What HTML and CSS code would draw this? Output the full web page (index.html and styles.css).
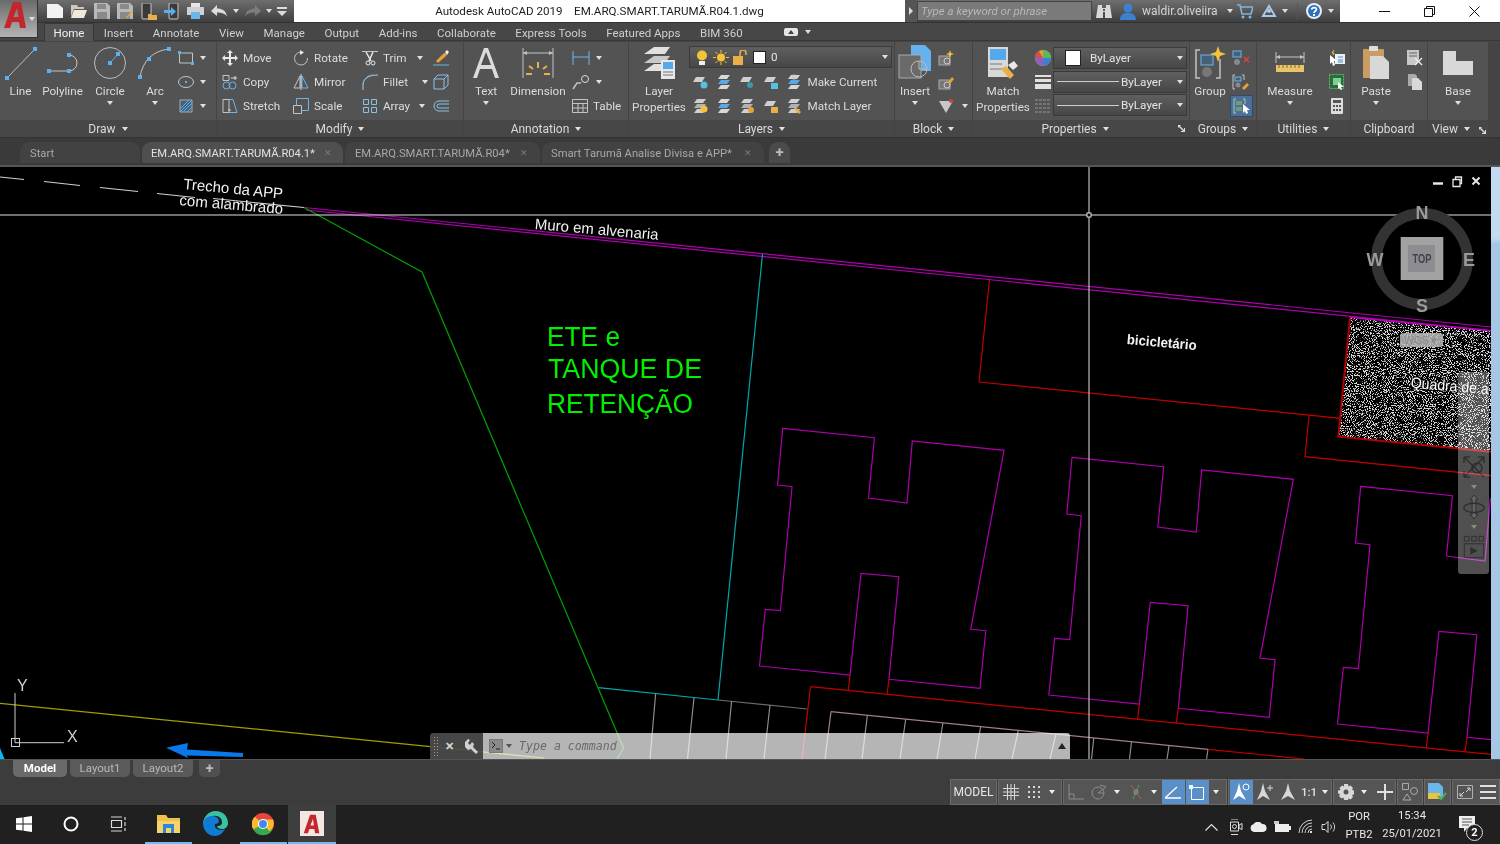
FILE: index.html
```html
<!DOCTYPE html>
<html lang="pt">
<head>
<meta charset="utf-8">
<title>Autodesk AutoCAD 2019</title>
<link rel="stylesheet" href="styles.css">
</head>
<body>
<svg class="sprite" width="0" height="0">
  <symbol id="sheet" viewBox="0 0 16 16"><path d="M4 3h9l-3 5H1z" fill="#cfcfcf"/></symbol>
  <symbol id="stack" viewBox="0 0 16 16"><path d="M5 1h9l-3 4H2z" fill="#d8d8d8"/><path d="M5 6h9l-3 4H2z" fill="#5aa7e8"/><path d="M5 11h9l-3 4H2z" fill="#d8d8d8"/></symbol>
  <symbol id="stackg" viewBox="0 0 16 16"><path d="M5 1h9l-3 4H2z" fill="#d0d0d0"/><path d="M5 6h9l-3 4H2z" fill="#b0b0b0"/><path d="M5 11h9l-3 4H2z" fill="#d0d0d0"/></symbol>
</svg>

<header class="titlebar">
  <div class="app-btn">
    <svg width="24" height="28" viewBox="0 0 24 28"><path d="M1 27 10 1h8l5 26h-6l-1-6H9l-2 6zM10.500 16h5l-1.500-9z" fill="#c2272d"/></svg>
    <span class="caret app-caret"></span>
  </div>
  <div class="qat">
    <span class="qi"><svg width="16" height="14" viewBox="0 0 16 14"><path d="M0 0h11l5 4v10H0z" fill="#f2f2f2"/></svg></span>
    <span class="qi"><svg width="17" height="14" viewBox="0 0 17 14"><path d="M1 1h6l1 2h6v2H4l-3 8z" fill="#cfc9b8"/><path d="M4 6h13l-3 8H1z" fill="#efe9d8"/></svg></span>
    <span class="qi"><svg width="16" height="16" viewBox="0 0 16 16"><path d="M0 0h13l3 3v13H0z" fill="#b9b9b9"/><path d="M3 1h9v5H3zM3 9h10v7H3z" fill="#8a8a8a"/></svg></span>
    <span class="qi"><svg width="16" height="16" viewBox="0 0 16 16"><path d="M0 0h13l3 3v13H0z" fill="#b9b9b9"/><path d="M3 1h9v5H3zM3 9h10v7H3z" fill="#8a8a8a"/><path d="M9 14l6-6 1 1-6 6z" fill="#e8a33d"/></svg></span>
    <span class="qi"><svg width="16" height="17" viewBox="0 0 16 17"><rect x="1" y="0" width="9" height="16" rx="1" fill="#3a3a3a" stroke="#c8c8c8"/><path d="M7 11h3l1 1h5v5H7z" fill="#e8b04a"/></svg></span>
    <span class="qi"><svg width="16" height="17" viewBox="0 0 16 17"><rect x="5" y="0" width="9" height="16" rx="1" fill="#3a3a3a" stroke="#c8c8c8"/><path d="M0 7h7V4l5 4.500-5 4.500V10H0z" fill="#56b0ee"/></svg></span>
    <span class="qi"><svg width="17" height="16" viewBox="0 0 17 16"><path d="M4 0h9v4H4z" fill="#e6e6e6"/><path d="M0 4h17v8H0z" fill="#d0d0d0"/><path d="M4 9h9v7H4z" fill="#6bb6ea"/></svg></span>
    <span class="qi"><svg width="16" height="12" viewBox="0 0 16 12"><path d="M0 6l6-6v3.500c5 0 9 2 10 8-2-3-5-4-10-4V11z" fill="#dcdcdc"/></svg></span>
    <span class="caret qcaret"></span>
    <span class="qi qredo"><svg width="16" height="12" viewBox="0 0 16 12"><path d="M16 6l-6-6v3.500c-5 0-9 2-10 8 2-3 5-4 10-4V11z" fill="#7d7d7d"/></svg></span>
    <span class="caret qcaret2"></span>
    <span class="qi qcustom"><svg width="10" height="9" viewBox="0 0 10 9"><path d="M0 0h10v2H0zM0 4h10L5 9z" fill="#dcdcdc"/></svg></span>
  </div>
  <div class="doc-title">Autodesk AutoCAD 2019 &nbsp;&nbsp; EM.ARQ.SMART.TARUMÃ.R04.1.dwg</div>
  <div class="search-arrow"><span class="tri-r"></span></div>
  <div class="search-box">Type a keyword or phrase</div>
  <div class="infocenter">
    <svg class="ic-bino" width="16" height="15" viewBox="0 0 16 15"><path d="M2 1h4v3h4V1h4l2 13H9V8H7v6H0z" fill="#d8d8d8"/><path d="M7 5h2v2H7z" fill="#555"/></svg>
    <svg class="ic-user" width="16" height="17" viewBox="0 0 16 17"><circle cx="8" cy="5" r="4.500" fill="#3f7fd0"/><path d="M0 17c0-5 3-6 5-7h6c2 1 5 2 5 7z" fill="#3f7fd0"/></svg>
    <span class="user">waldir.oliveiira</span>
    <span class="caret ic-c1"></span>
    <svg class="ic-cart" width="16" height="15" viewBox="0 0 16 15"><path d="M0 1h3l2 9h9l2-7H4" fill="none" stroke="#7fb4e0" stroke-width="1.600"/><circle cx="6" cy="13" r="1.500" fill="#7fb4e0"/><circle cx="13" cy="13" r="1.500" fill="#7fb4e0"/></svg>
    <svg class="ic-a360" width="16" height="14" viewBox="0 0 16 14"><path d="M8 2 2 12h12z" fill="none" stroke="#a8c8ea" stroke-width="2"/><circle cx="8" cy="7" r="2" fill="#a8c8ea"/></svg>
    <span class="caret ic-c2"></span>
    <span class="ic-sep"></span>
    <svg class="ic-help" width="16" height="16" viewBox="0 0 16 16"><circle cx="8" cy="8" r="8" fill="#e8eef6"/><circle cx="8" cy="8" r="6" fill="#2f6fc0"/><path d="M5.500 6.500C6 4 10.500 4 10.500 6.500 10.500 8 8 8 8 10" fill="none" stroke="#fff" stroke-width="1.600"/><rect x="7" y="11" width="2" height="2" fill="#fff"/></svg>
    <span class="caret ic-c3"></span>
  </div>
  <div class="winctl">
    <svg width="11" height="11" viewBox="0 0 11 11"><path d="M0 5.500h11" stroke="#111"/></svg>
    <svg width="11" height="11" viewBox="0 0 11 11"><path d="M.5 2.500h8v8h-8zM2.500 2.500v-2h8v8h-2" fill="none" stroke="#111"/></svg>
    <svg width="11" height="11" viewBox="0 0 11 11"><path d="M.5.500l10 10M10.500.500l-10 10" stroke="#111"/></svg>
  </div>
</header>

<nav class="ribbon-tabs">
  <span class="rtab active">Home</span><span class="rtab">Insert</span><span class="rtab">Annotate</span><span class="rtab">View</span><span class="rtab">Manage</span><span class="rtab">Output</span><span class="rtab">Add-ins</span><span class="rtab">Collaborate</span><span class="rtab">Express Tools</span><span class="rtab">Featured Apps</span><span class="rtab">BIM 360</span>
  <svg class="rtab-extra" width="14" height="8" viewBox="0 0 14 8"><rect width="14" height="8" rx="2" fill="#e6e6e6"/><path d="M4 6l3-4 3 4z" fill="#444"/></svg>
  <span class="caret rtab-caret"></span>
</nav>

<section class="ribbon">
  <div class="panel p-draw">
    <div class="pbody">
      <div class="lg w41"><svg width="34" height="36" viewBox="0 0 34 36"><path d="M3 33 31 4" stroke="#bdbdbd"/><path d="M1 31h4v4H1zM29 2h4v4h-4z" fill="#5ab0f0"/></svg><span>Line</span></div>
      <div class="lg w43"><svg width="34" height="36" viewBox="0 0 34 36"><path d="M3 26H23A8 8 0 0 0 23 10" fill="none" stroke="#c4c4c4"/><path d="M1 24h4v4H1zM21 24h4v4h-4zM21 8h4v4h-4z" fill="#5ab0f0"/></svg><span>Polyline</span></div>
      <div class="lg w52"><svg width="34" height="36" viewBox="0 0 34 36"><circle cx="17" cy="18" r="15.500" fill="none" stroke="#bdbdbd"/><path d="M17 18l8-9" stroke="#5ab0f0"/><path d="M15 16h4v4h-4zM23 7h4v4h-4z" fill="#5ab0f0"/></svg><span>Circle</span><span class="caret"></span></div>
      <div class="lg w38"><svg width="34" height="36" viewBox="0 0 34 36"><path d="M2 32C5 15 15 6 31 4" fill="none" stroke="#c4c4c4"/><path d="M0 30h4v4H0zM9 12h4v4H9zM29 2h4v4h-4z" fill="#5ab0f0"/></svg><span>Arc</span><span class="caret"></span></div>
      <div class="col col-draw">
        <div class="row"><svg width="16" height="16" viewBox="0 0 16 16"><path d="M1.500 3h13v10h-13z" fill="none" stroke="#c4c4c4"/><path d="M0 1h3v3H0zM13 12h3v3h-3z" fill="#5ab0f0"/></svg><span class="caret cm"></span></div>
        <div class="row"><svg width="16" height="16" viewBox="0 0 16 16"><ellipse cx="8" cy="8" rx="7.500" ry="5.500" fill="none" stroke="#c4c4c4"/><path d="M7 7h2v2H7z" fill="#5ab0f0"/></svg><span class="caret cm"></span></div>
        <div class="row"><svg width="16" height="16" viewBox="0 0 16 16"><path d="M2 2h12v12H2z" fill="#46607a" stroke="#aaa"/><path d="M2 11 11 2M2 14 14 2M5 14l9-9M9 14l5-5" stroke="#5ab0f0"/></svg><span class="caret cm"></span></div>
      </div>
    </div>
    <div class="ptitle">Draw <span class="caret"></span></div>
  </div>

  <div class="panel p-modify">
    <div class="pbody pb5">
      <div class="col w71">
        <div class="row"><svg width="16" height="16" viewBox="0 0 16 16"><path d="M8 0l3 3H9v4h4V5l3 3-3 3V9H9v4h2l-3 3-3-3h2V9H3v2L0 8l3-3v2h4V3H5z" fill="#e8e8e8"/></svg><span class="t">Move</span></div>
        <div class="row"><svg width="16" height="16" viewBox="0 0 16 16"><path d="M1 1.500h6v5H1z" fill="none" stroke="#c4c4c4"/><circle cx="4.500" cy="11.500" r="3.500" fill="none" stroke="#6bb6ea"/><circle cx="10.500" cy="11.500" r="3.500" fill="none" stroke="#6bb6ea"/><path d="M9 4h6M13 2v4" stroke="#ddd"/></svg><span class="t">Copy</span></div>
        <div class="row"><svg width="16" height="16" viewBox="0 0 16 16"><path d="M1 1.500h6v13H1z" fill="none" stroke="#c4c4c4"/><path d="M7 1.500h4l4 13H7" fill="none" stroke="#6bb6ea"/><path d="M6 12h3" stroke="#ddd"/></svg><span class="t">Stretch</span></div>
      </div>
      <div class="col w69">
        <div class="row"><svg width="16" height="16" viewBox="0 0 16 16"><path d="M8 2A6.500 6.500 0 1 0 14.500 8" fill="none" stroke="#c4c4c4"/><path d="M7 0l4 2.500L7 5z" fill="#e8e8e8"/></svg><span class="t">Rotate</span></div>
        <div class="row"><svg width="16" height="16" viewBox="0 0 16 16"><path d="M7 2 1 14h6z" fill="none" stroke="#c4c4c4"/><path d="M9 2l6 12H9z" fill="none" stroke="#6bb6ea"/><path d="M8 0v16" stroke="#ddd"/></svg><span class="t">Mirror</span></div>
        <div class="row"><svg width="16" height="16" viewBox="0 0 16 16"><path d="M.5 7.500h8v8h-8z" fill="none" stroke="#c4c4c4"/><path d="M3.500.5h12v12" fill="none" stroke="#6bb6ea"/><path d="M3.500.5v7M15.500 12.500h-7" stroke="#6bb6ea"/></svg><span class="t">Scale</span></div>
      </div>
      <div class="col w71">
        <div class="row"><svg width="16" height="16" viewBox="0 0 16 16"><path d="M0 1.500h16" stroke="#c4c4c4"/><path d="M4 2l5 9M11 2 7 11" stroke="#e8e8e8" stroke-width="1.500"/><circle cx="6" cy="13" r="2" fill="none" stroke="#e8e8e8"/><circle cx="11" cy="13" r="2" fill="none" stroke="#e8e8e8"/></svg><span class="t">Trim</span><span class="caret ctrim"></span></div>
        <div class="row"><svg width="16" height="16" viewBox="0 0 16 16"><path d="M1 16V11C1 5 6 1 16 1" fill="none" stroke="#c4c4c4"/><path d="M1 11C1 5 6 1 11 1" fill="none" stroke="#6bb6ea"/></svg><span class="t">Fillet</span><span class="caret cfillet"></span></div>
        <div class="row"><svg width="16" height="16" viewBox="0 0 16 16"><path d="M1.500 1.500h5v5h-5zM9.500 1.500h5v5h-5zM1.500 9.500h5v5h-5zM9.500 9.500h5v5h-5z" fill="none" stroke="#8cc0e8"/></svg><span class="t">Array</span><span class="caret carray"></span></div>
      </div>
      <div class="col">
        <div class="row"><svg width="16" height="16" viewBox="0 0 16 16"><path d="M3 11 11 3l3 1-1 2-8 7z" fill="#e9a23b"/><path d="M12 2l2-2 2 2-2 3z" fill="#eee"/><path d="M0 15h16" stroke="#6bb6ea"/></svg></div>
        <div class="row"><svg width="16" height="16" viewBox="0 0 16 16"><path d="M1 5h10v10H1zM1 5l4-4h10v10l-4 4M11 5l4-4" fill="none" stroke="#8cc0e8"/></svg></div>
        <div class="row"><svg width="16" height="16" viewBox="0 0 16 16"><path d="M16 3H6a5 5 0 0 0 0 10h10M16 6H6a2 2 0 0 0 0 4h10" fill="none" stroke="#8cc0e8"/></svg></div>
      </div>
    </div>
    <div class="ptitle">Modify <span class="caret"></span></div>
  </div>

  <div class="panel p-anno">
    <div class="pbody">
      <div class="lg w44"><svg width="28" height="36" viewBox="0 0 28 36"><path d="M1 33 12 3h4l11 30h-4l-3-9H8l-3 9zM9 20h10L14 7z" fill="#dcdcdc"/></svg><span>Text</span><span class="caret"></span></div>
      <div class="lg w60"><svg width="34" height="36" viewBox="0 0 34 36"><path d="M2 3v30M32 3v30M2 8h30" stroke="#c4c4c4" fill="none"/><path d="M2 8l4-2v4zM32 8l-4-2v4z" fill="#c4c4c4"/><path d="M17 17v6M8 21l4 3M26 21l-4 3M5 29h6M23 29h6" stroke="#e9b04a" stroke-width="2"/></svg><span>Dimension</span></div>
      <div class="col col-anno">
        <div class="row"><svg width="18" height="16" viewBox="0 0 18 16"><path d="M1 1v14M17 1v14M1 7h16" stroke="#6bb6ea"/></svg><span class="caret cann"></span></div>
        <div class="row"><svg width="18" height="16" viewBox="0 0 18 16"><path d="M1 15l4-6h4" fill="none" stroke="#c4c4c4" stroke-width="1.500"/><circle cx="13" cy="5" r="3.500" fill="none" stroke="#ddd"/></svg><span class="caret cann"></span></div>
        <div class="row"><svg width="16" height="14" viewBox="0 0 16 14"><path d="M.5.500h15v13H.5zM.5 4.500h15M.5 9h15M6 4.500v9M11 4.500v9" fill="none" stroke="#c4c4c4"/></svg><span class="t">Table</span></div>
      </div>
    </div>
    <div class="ptitle">Annotation <span class="caret"></span></div>
  </div>

  <div class="panel p-layers">
    <div class="pbody">
      <div class="lg w60 lg2"><svg width="36" height="36" viewBox="0 0 36 36"><path d="M13 2h16l-5 7H3z" fill="#e0e0e0"/><path d="M13 11h16l-5 7H3z" fill="#c8c8c8"/><path d="M13 19h16l-5 7H3z" fill="#e0e0e0"/><rect x="20" y="15" width="14" height="19" fill="#e8e8e8"/><rect x="22" y="17" width="10" height="7" fill="#56a8ec"/><path d="M22 27h10M22 30h10" stroke="#777"/></svg><span>Layer<br>Properties</span></div>
      <div class="col col-layers">
        <div class="combo layer-combo">
          <svg width="14" height="15" viewBox="0 0 14 15"><circle cx="7" cy="5.500" r="5" fill="#f5c33b"/><path d="M4 11h6v4H4z" fill="#eee"/></svg>
          <svg width="16" height="15" viewBox="0 0 16 15"><circle cx="8" cy="7.500" r="4" fill="#f5c33b"/><path d="M8 0v3M8 12v3M0 7.500h3M13 7.500h3M2.500 2l2 2M11.500 11l2 2M2.500 13l2-2M11.500 4l2-2" stroke="#f5c33b"/></svg>
          <svg width="15" height="15" viewBox="0 0 15 15"><rect y="6" width="10" height="9" fill="#e9b04a"/><path d="M7 6V3a3 3 0 0 1 6 0v2" fill="none" stroke="#e9b04a" stroke-width="1.500"/></svg>
          <span class="swatch"></span>
          <span class="combo-t">0</span>
          <span class="caret combo-c"></span>
        </div>
        <div class="row lrow">
          <span class="li"><svg width="16" height="16"><use href="#sheet"/><circle cx="12" cy="11" r="3.500" fill="#56c0e0"/></svg></span>
          <span class="li"><svg width="16" height="16"><use href="#stack"/></svg></span>
          <span class="li"><svg width="16" height="16"><use href="#sheet"/><circle cx="11" cy="11" r="3" fill="#3a9aa8"/></svg></span>
          <span class="li"><svg width="16" height="16"><use href="#sheet"/><rect x="8" y="9" width="7" height="6" fill="#56c0e0"/></svg></span>
          <span class="li"><svg width="16" height="16"><use href="#stack"/><circle cx="8" cy="3" r="2.500" fill="#ccc"/></svg></span>
          <span class="t tl">Make Current</span>
        </div>
        <div class="row lrow">
          <span class="li"><svg width="16" height="16"><use href="#stackg"/><circle cx="12" cy="11" r="3.500" fill="#f5c33b"/></svg></span>
          <span class="li"><svg width="16" height="16"><use href="#stack"/></svg></span>
          <span class="li"><svg width="16" height="16"><use href="#stackg"/><circle cx="12" cy="12" r="3" fill="#e9a23b"/></svg></span>
          <span class="li"><svg width="16" height="16"><use href="#sheet"/><rect x="8" y="9" width="7" height="6" fill="#e9b04a"/></svg></span>
          <span class="li"><svg width="16" height="16"><use href="#stackg"/><path d="M9 9l6 5-2 2-5-5z" fill="#e9b04a"/></svg></span>
          <span class="t tl">Match Layer</span>
        </div>
      </div>
    </div>
    <div class="ptitle">Layers <span class="caret"></span></div>
  </div>

  <div class="panel p-block">
    <div class="pbody">
      <div class="lg w40"><svg width="36" height="36" viewBox="0 0 36 36"><path d="M14 0h14l6 6v20H14z" fill="#66b2f0"/><rect x="2" y="10" width="22" height="23" fill="#6a6a6a" stroke="#aaa"/><circle cx="22" cy="24" r="8" fill="none" stroke="#bbb"/><path d="M22 16v8h8" stroke="#bbb" fill="none"/></svg><span>Insert</span><span class="caret"></span></div>
      <div class="col col-block">
        <div class="row"><svg width="16" height="16" viewBox="0 0 16 16"><rect x="1" y="6" width="11" height="9" fill="#777" stroke="#aaa"/><circle cx="9" cy="11" r="3" fill="none" stroke="#ccc"/><path d="M12 0l1 3 3 1-3 1-1 3-1-3-3-1 3-1z" fill="#f5c33b"/></svg></div>
        <div class="row"><svg width="16" height="16" viewBox="0 0 16 16"><rect x="1" y="6" width="11" height="9" fill="#777" stroke="#aaa"/><circle cx="9" cy="11" r="3" fill="none" stroke="#ccc"/><path d="M10 8l4-5 2 2-4 5z" fill="#e9a23b"/></svg></div>
        <div class="row"><svg width="16" height="16" viewBox="0 0 16 16"><path d="M1 3h14L8 15z" fill="#c8c8c8"/><circle cx="13" cy="3" r="2" fill="#d04040"/></svg><span class="caret cblock"></span></div>
      </div>
    </div>
    <div class="ptitle">Block <span class="caret"></span></div>
  </div>

  <div class="panel p-props">
    <div class="pbody">
      <div class="lg w60 lg2"><svg width="34" height="36" viewBox="0 0 34 36"><rect x="2" y="2" width="20" height="30" fill="#d8d8d8"/><rect x="4" y="4" width="16" height="11" fill="#56a8ec"/><path d="M4 19h12M4 24h12" stroke="#777"/><path d="M15 24l5-3 8 9-4 4z" fill="#e9b04a"/><path d="M22 20l6-4 4 5-5 4z" fill="#e8e8e8"/></svg><span>Match<br>Properties</span></div>
      <div class="col col-pi">
        <div class="row"><svg width="16" height="16" viewBox="0 0 16 16"><circle cx="8" cy="8" r="8" fill="#e8a030"/><path d="M8 8V0A8 8 0 0 1 16 8z" fill="#5cb85c"/><path d="M8 8h8a8 8 0 0 1-8 8z" fill="#3d7fd0"/><path d="M8 8v8A8 8 0 0 1 0 8z" fill="#9060c0"/><path d="M8 8H0A8 8 0 0 1 4 1z" fill="#d04f4f"/></svg></div>
        <div class="row"><svg width="16" height="16" viewBox="0 0 16 16"><path d="M0 1h16v2H0zM0 5h16v3H0zM0 10h16v5H0z" fill="#e0e0e0"/></svg></div>
        <div class="row"><svg width="16" height="14" viewBox="0 0 16 14"><path d="M0 1h16M0 5h16M0 9h16M0 13h16" stroke="#999" stroke-dasharray="3 1"/></svg></div>
      </div>
      <div class="col col-combos">
        <div class="combo pc"><span class="swatch sw-p"></span><span class="combo-t ct-by">ByLayer</span><span class="caret combo-c"></span></div>
        <div class="combo pc"><span class="lt"></span><span class="combo-t">ByLayer</span><span class="caret combo-c"></span></div>
        <div class="combo pc"><span class="lt"></span><span class="combo-t">ByLayer</span><span class="caret combo-c"></span></div>
      </div>
    </div>
    <div class="ptitle ptitle-props">Properties <span class="caret"></span><svg class="launch" width="7" height="7" viewBox="0 0 7 7"><path d="M0 0h3L2 1l4 4V3l1 0v4H3V6h2L1 2 0 3z" fill="#ddd"/></svg></div>
  </div>

  <div class="panel p-groups">
    <div class="pbody">
      <div class="lg w40"><svg width="32" height="36" viewBox="0 0 32 36"><path d="M6 5H2v28h4M22 33h4V14" fill="none" stroke="#c4c4c4" stroke-width="1.500"/><rect x="7" y="10" width="12" height="10" fill="#46607a" stroke="#6bb6ea"/><circle cx="13" cy="27" r="5" fill="#777"/><path d="M24 1l2 6 6 2-6 2-2 6-2-6-6-2 6-2z" fill="#f5c33b"/></svg><span>Group</span></div>
      <div class="col col-gr">
        <div class="row"><svg width="18" height="16" viewBox="0 0 18 16"><rect x="1" y="1" width="8" height="6" fill="#46607a" stroke="#6bb6ea"/><circle cx="5" cy="12" r="3" fill="#888"/><path d="M12 7l5 5M17 7l-5 5" stroke="#e04040" stroke-width="1.600"/></svg></div>
        <div class="row"><svg width="18" height="16" viewBox="0 0 18 16"><path d="M3 1H1v14h2M10 1h2v5" fill="none" stroke="#c4c4c4"/><rect x="3" y="3" width="6" height="4" fill="#46607a" stroke="#6bb6ea"/><circle cx="6" cy="11" r="2.500" fill="#888"/><path d="M10 14l5-5 2 2-5 5z" fill="#e9a23b"/></svg></div>
        <div class="row"><span class="grp-on"><svg width="18" height="16" viewBox="0 0 18 16"><path d="M3 1H1v14h2M10 1h2v5" fill="none" stroke="#9fd0a0"/><rect x="3" y="3" width="6" height="4" fill="#6f9f70"/><rect x="3" y="9" width="6" height="4" fill="#6f9f70"/><path d="M10 6l7 6h-3l1 3-2 1-1-3-2 2z" fill="#fff"/></svg></span></div>
      </div>
    </div>
    <div class="ptitle">Groups <span class="caret"></span></div>
  </div>

  <div class="panel p-util">
    <div class="pbody">
      <div class="lg w66"><svg width="30" height="36" viewBox="0 0 30 36"><path d="M1 7v11M29 7v11M1 12h28" stroke="#c4c4c4" fill="none"/><path d="M1 12l4-2v4zM29 12l-4-2v4z" fill="#c4c4c4"/><rect x="1" y="20" width="28" height="7" fill="#e9c46a"/><path d="M4 20v3M8 20v3M12 20v3M16 20v3M20 20v3M24 20v3" stroke="#7a6a30"/></svg><span>Measure</span><span class="caret"></span></div>
      <div class="col col-ut">
        <div class="row"><svg width="16" height="16" viewBox="0 0 16 16"><rect x="6" y="4" width="10" height="10" fill="#e8f0f8"/><path d="M9 7h5M9 10h5M9 12h5" stroke="#5a8ac0"/><path d="M1 5l7 6H5l1 4-2 1-1-4-2 2z" fill="#fff"/><path d="M5 0 3 3h2L4 5" stroke="#f5c33b" fill="none"/></svg></div>
        <div class="row"><svg width="16" height="16" viewBox="0 0 16 16"><rect x=".5" y=".5" width="14" height="14" fill="#2f6a3f" stroke="#5cb870" stroke-dasharray="2 1"/><rect x="4" y="4" width="8" height="7" fill="#7cd090"/><path d="M9 8l6 5h-3l1 3-1 0-2-2-1 1z" fill="#fff"/></svg></div>
        <div class="row"><svg width="12" height="16" viewBox="0 0 12 16"><rect width="12" height="16" rx="1" fill="#ddd"/><rect x="2" y="2" width="8" height="3" fill="#555"/><path d="M2 7h2v2H2zM5 7h2v2H5zM8 7h2v2H8zM2 11h2v2H2zM5 11h2v2H5zM8 11h2v2H8z" fill="#555"/></svg></div>
      </div>
    </div>
    <div class="ptitle">Utilities <span class="caret"></span></div>
  </div>

  <div class="panel p-clip">
    <div class="pbody">
      <div class="lg w50"><svg width="28" height="36" viewBox="0 0 28 36"><rect x="1" y="4" width="21" height="29" rx="1" fill="#c99d62"/><rect x="7" y="1" width="9" height="5" rx="1" fill="#ddd"/><path d="M8 11h13l6 6v17H8z" fill="#d8d8d8"/></svg><span>Paste</span><span class="caret"></span></div>
      <div class="col col-cl">
        <div class="row"><svg width="16" height="16" viewBox="0 0 16 16"><path d="M0 0h12v9l-3 6H0z" fill="#c8c8c8"/><path d="M2 3h8M2 6h8" stroke="#666"/><path d="M8 8l7 7M15 8l-7 7" stroke="#eee" stroke-width="1.400"/></svg></div>
        <div class="row"><svg width="14" height="16" viewBox="0 0 14 16"><path d="M0 0h7l2 2v10H0z" fill="#aaa"/><path d="M4 4h6l4 4v8H4z" fill="#d8d8d8"/></svg></div>
      </div>
    </div>
    <div class="ptitle">Clipboard</div>
  </div>

  <div class="panel p-view">
    <div class="pbody">
      <div class="lg w60"><svg width="32" height="36" viewBox="0 0 32 36"><path d="M1 6h13v10h17v14H1z" fill="#d8d8d8"/></svg><span>Base</span><span class="caret"></span></div>
    </div>
    <div class="ptitle ptitle-view">View <span class="caret"></span></div>
  </div>
  <svg class="launch launch-view" width="7" height="7" viewBox="0 0 7 7"><path d="M0 0h3L2 1l4 4V3l1 0v4H3V6h2L1 2 0 3z" fill="#ddd"/></svg>
</section>

<nav class="filetabs">
  <span class="ftab ft-start">Start</span>
  <span class="ftab ft-active">EM.ARQ.SMART.TARUMÃ.R04.1*<i class="x">✕</i></span>
  <span class="ftab ft-2">EM.ARQ.SMART.TARUMÃ.R04*<i class="x">✕</i></span>
  <span class="ftab ft-3">Smart Tarumã Analise Divisa e APP*<i class="x">✕</i></span>
  <span class="ftab ft-plus">+</span>
</nav>

<main class="workspace">
  <div class="canvas">
    <svg class="drawing" width="1491" height="592" viewBox="0 167 1491 592">
      <defs>
        <filter id="speckle" x="0" y="0" width="100%" height="100%" color-interpolation-filters="sRGB">
          <feTurbulence type="fractalNoise" baseFrequency="0.95" numOctaves="2" seed="7"/>
          <feColorMatrix values="0 0 0 0 .85  0 0 0 0 .85  0 0 0 0 .85  14 0 0 0 -7.400"/>
        </filter>
        <clipPath id="hatchclip"><path d="M1350 317.300 1338.300 436.700 1491 451.700V330.700z"/></clipPath>
        <g id="bldg" fill="none" stroke="#ac00ac" stroke-width="1.200">
          <path d="M782.700 428.300 874.400 437.700 868.500 498 907 503 912.300 441 1004 450.300 970.700 629.300 985.800 630.700 980 688.300 889 679.300 898.800 576.700 861 573.300 850 675 759.500 666 765.300 609.300 780.400 610.700 792 486.700 777.500 485Z"/>
          <path d="M850 675 848.300 690M889 679.300 887 694" stroke="#c00000"/>
        </g>
      </defs>

      <g fill="none" stroke-width="1.200">
        <path d="M0 177 24 179.500M44 181.500 80 185.500M100 187.500 138 191.500M157 193.500 195 197.500M213 198.500 304 207.500" stroke="#d0d0d0"/>
        <path d="M304 207.500 1491 327M306 210 1491 330.700" stroke="#ac00ac"/>
        <path d="M304 207.500 422 272 623.500 748 617 759" stroke="#00a000"/>
        <path d="M762.500 254 718 700" stroke="#00a8a8"/>
        <path d="M598.500 687.700 718 700" stroke="#00a8a8"/>
        <path d="M718 700 807.600 709" stroke="#6a6a6a"/>
        <path d="M0 703.300 544 758" stroke="#a0a000"/>
        <g stroke="#8c8c8c">
          <path d="M655.600 694 650 759M694 698 687.500 759M731.600 701 726 759M770 705 764 759"/>
          <path d="M867.400 715 862 759M905.700 719 900 759M942.900 723 937 759M980.600 727 975 759M1018.300 730.500 1012 759M1056 734 1050 759M1093.800 738 1091.500 759M1131.500 742 1129.500 759M1169 746 1167 759M1208 749.500 1206.500 759"/>
        </g>
        <path d="M831 711.700 1208 749.300" stroke="#a08080"/>
        <path d="M831 711.700 825 759" stroke="#a08080"/>
        <path d="M1208 749.300 1304 759" stroke="#c00000"/>
        <path d="M810.500 686.700 1491 754.300M810.500 686.700 802 759" stroke="#c00000"/>
        <path d="M989.400 280 979 382 1340.800 418.300M1309 415.700 1305 456.700 1491 475.700" stroke="#c00000"/>
      </g>

      <use href="#bldg"/>
      <use href="#bldg" transform="translate(289.300 29)"/>
      <use href="#bldg" transform="translate(578 58)"/>
      <use href="#bldg" transform="translate(867 87)"/>

      <g clip-path="url(#hatchclip)"><rect x="1335" y="315" width="160" height="140" filter="url(#speckle)"/></g>
      <path d="M1350 317.300 1338.300 436.700 1491 451.700" fill="none" stroke="#b00000" stroke-width="2"/>
      <path d="M1350 317.300 1491 330.700" fill="none" stroke="#c000c0" stroke-width="1.500"/>

      <path d="M0 748 4.500 759H0z" fill="#00bff0"/>
      <path d="M166 747.700 188 743 187 749.500 243 753 243 757 187 755.500 188 758z" fill="#0a78e8"/>

      <g class="ucs" fill="none" stroke="#cfcfcf">
        <path d="M15 693V742.700H64"/>
        <rect x="11.500" y="738.500" width="8" height="8"/>
      </g>
      <text class="ucs-t" x="17" y="691">Y</text>
      <text class="ucs-t" x="67" y="742">X</text>

      <path d="M0 215H1491M1089 167V759" stroke="#e2e2e2" fill="none"/>
      <rect x="1087" y="213" width="4" height="4" fill="#000" stroke="#e2e2e2"/>

      <text class="lbl" transform="translate(183 189) rotate(5.500)" textLength="100" lengthAdjust="spacingAndGlyphs">Trecho da APP</text>
      <text class="lbl" transform="translate(179 205) rotate(5)" textLength="104" lengthAdjust="spacingAndGlyphs">com alambrado</text>
      <text class="lbl" transform="translate(534.500 229) rotate(5)" textLength="124" lengthAdjust="spacingAndGlyphs">Muro em alvenaria</text>
      <text class="lbl lbl-b" transform="translate(1126.500 344) rotate(5)" textLength="70" lengthAdjust="spacingAndGlyphs">bicicletário</text>
      <text class="lbl lbl-q" transform="translate(1410.500 387.500) rotate(5)" textLength="78" lengthAdjust="spacingAndGlyphs">Quadra de a</text>

      <text class="ete" x="547" y="346" textLength="73" lengthAdjust="spacingAndGlyphs">ETE e</text>
      <text class="ete" x="548" y="378" textLength="154" lengthAdjust="spacingAndGlyphs">TANQUE DE</text>
      <text class="ete" x="547" y="413" textLength="146" lengthAdjust="spacingAndGlyphs">RETENÇÃO</text>

      <!-- viewport controls -->
      <path d="M1433 183.500H1443" stroke="#e6e6e6" stroke-width="2.500"/>
      <path d="M1453 179.500h7v7h-7zM1455.500 179.500v-2.500h6v6.500h-1.500" fill="none" stroke="#e6e6e6" stroke-width="1.300"/>
      <path d="M1472.500 177.500 1479.500 184.500M1479.500 177.500 1472.500 184.500" stroke="#e6e6e6" stroke-width="2"/>

      <!-- viewcube -->
      <circle cx="1422" cy="259" r="45.500" fill="none" stroke="#333" stroke-width="11"/>
      <rect x="1400.700" y="237" width="42.600" height="43" fill="#a2a2a2"/>
      <rect x="1408" y="245" width="27" height="27" fill="#8c8c92"/>
      <text class="top" x="1422" y="263" textLength="19" lengthAdjust="spacingAndGlyphs">TOP</text>
      <text class="dir" x="1422" y="219">N</text>
      <text class="dir" x="1422" y="312">S</text>
      <text class="dir" x="1375" y="266">W</text>
      <text class="dir" x="1469" y="266">E</text>

      <rect x="1400" y="333" width="43" height="14" rx="3" fill="#b8b8b8" fill-opacity=".85"/>
      <text class="wcs" x="1404" y="344">WCS ▾</text>
    </svg>

    <div class="navbar">
      <svg width="24" height="24" viewBox="0 0 24 24"><path d="M2 2l20 20M22 2 2 22M2 2h6M2 2v6M22 2h-6M22 2v6M2 22h6M2 22v-6" fill="none" stroke="#2e2e2e" stroke-width="1.500"/><circle cx="15" cy="13" r="5" fill="none" stroke="#2e2e2e" stroke-width="1.500"/></svg>
      <span class="caret nav-caret"></span>
      <svg width="24" height="24" viewBox="0 0 24 26"><path d="M12 0l4 5h-2v16h2l-4 5-4-5h2V5H8z" fill="#666" stroke="#2e2e2e"/><ellipse cx="12" cy="14" rx="11" ry="5" fill="none" stroke="#2e2e2e" stroke-width="1.500"/></svg>
      <span class="caret nav-caret"></span>
      <svg width="24" height="24" viewBox="0 0 24 26"><path d="M1.500 1.500h5v5h-5zM9.500 1.500h5v5h-5zM17.500 1.500h5v5h-5z" fill="none" stroke="#2e2e2e"/><path d="M1.500 9.500h21v15h-21z" fill="none" stroke="#2e2e2e"/><path d="M8 13l8 4-8 4z" fill="#2e2e2e"/></svg>
    </div>

    <div class="cmdline">
      <div class="cmd-left">
        <span class="grip"></span>
        <span class="cmd-x">✕</span>
        <svg width="15" height="15" viewBox="0 0 15 15"><path d="M1 3l3-3 2 1-2 3 2 2 2-3 2 2-1 3 5 5-2 2-5-5-3 1-3-3z" fill="#e0e0e0"/></svg>
      </div>
      <div class="cmd-input">
        <span class="prompt-ic"><svg width="14" height="14" viewBox="0 0 14 14"><rect width="14" height="14" rx="2" fill="#8a8a8a" stroke="#666"/><path d="M3 3l3 3-3 3M7 10h4" fill="none" stroke="#222"/></svg></span>
        <span class="caret cmd-caret"></span>
        <span class="cmd-text">Type a command</span>
        <span class="cmd-up"></span>
      </div>
    </div>
  </div>
  <div class="scrollstrip"></div>
</main>

<footer class="status">
  <div class="layout-tabs">
    <span class="ltab lt-model">Model</span>
    <span class="ltab">Layout1</span>
    <span class="ltab">Layout2</span>
    <span class="ltab lt-plus">+</span>
  </div>
  <div class="statusbar">
    <div class="sg g1"><span class="model">MODEL</span></div>
    <div class="sg g2">
      <span class="sb"><svg width="16" height="16" viewBox="0 0 16 16"><path d="M0 4.500h16M0 8h16M0 11.500h16M4.500 0v16M8 0v16M11.500 0v16" stroke="#d8d8d8"/></svg></span>
      <span class="sb"><svg width="14" height="14" viewBox="0 0 14 14"><path d="M1 1h2v2H1zM6 1h2v2H6zM11 1h2v2h-2zM1 6h2v2H1zM6 6h2v2H6zM11 6h2v2h-2zM1 11h2v2H1zM6 11h2v2H6zM11 11h2v2h-2z" fill="#d8d8d8"/></svg></span>
      <span class="sc"><span class="caret cw"></span></span>
    </div>
    <div class="sg g3">
      <span class="sb"><svg width="16" height="16" viewBox="0 0 16 16"><path d="M1 0v15h15M1 10h5v5" fill="none" stroke="#8c8c8c"/></svg></span>
      <span class="sb"><svg width="16" height="16" viewBox="0 0 16 16"><circle cx="7" cy="9" r="6" fill="none" stroke="#8c8c8c"/><path d="M7 9l8-6M9 1l6 2M7 9l6 0" stroke="#8c8c8c"/></svg></span>
      <span class="sc"><span class="caret cw"></span></span>
      <span class="sb"><svg width="14" height="16" viewBox="0 0 14 16"><path d="M2 1l10 14" stroke="#c05050"/><path d="M10 1 4 15" stroke="#50a050"/><circle cx="7" cy="8" r="2" fill="none" stroke="#999"/></svg></span>
      <span class="sc"><span class="caret cw"></span></span>
      <span class="sb on"><svg width="16" height="14" viewBox="0 0 16 14"><path d="M0 13h16M0 13 12 2" fill="none" stroke="#fff" stroke-width="1.300"/></svg></span>
      <span class="sb on"><svg width="16" height="16" viewBox="0 0 16 16"><path d="M2.500 3.500h12v12h-12z" fill="none" stroke="#fff"/><path d="M0 1h4v4H0z" fill="#dff"/></svg></span>
      <span class="sc"><span class="caret cw"></span></span>
    </div>
    <div class="sg g4">
      <span class="sb on"><svg width="18" height="18" viewBox="0 0 18 18"><path d="M7 0 9 8l5 9-7-4-6 4 4-9z" fill="#fff"/><circle cx="14" cy="4" r="3" fill="none" stroke="#fff"/></svg></span>
      <span class="sb"><svg width="16" height="18" viewBox="0 0 16 18"><path d="M6 0 8 8l5 9-7-4-6 4 4-9z" fill="#d8d8d8"/><path d="M13 2v6M10 5h6" stroke="#d8d8d8"/></svg></span>
      <span class="sb"><svg width="14" height="18" viewBox="0 0 14 18"><path d="M7 0l2 8 5 9-7-4-7 4 5-9z" fill="#d8d8d8"/></svg></span>
      <span class="sb sb-ratio">1:1</span>
      <span class="sc sc-n"><span class="caret cw"></span></span>
    </div>
    <div class="sg g5">
      <span class="sb"><svg width="16" height="16" viewBox="0 0 16 16"><path d="M6 0h4l.500 2.500 2-1 2.500 2.500-1 2 2.500.5v4l-2.500.5 1 2-2.500 2.500-2-1L10 16H6l-.5-2.500-2 1L1 12l1-2-2-.5v-3L2.500 6l-1-2L4 1.500l2 1z" fill="#d8d8d8"/><circle cx="8" cy="8" r="2.500" fill="#555"/></svg></span>
      <span class="sc"><span class="caret cw"></span></span>
      <span class="sb sb-plus"><svg width="16" height="16" viewBox="0 0 16 16"><path d="M8 0v16M0 8h16" stroke="#e0e0e0" stroke-width="2"/></svg></span>
    </div>
    <div class="sg g6"><span class="sb"><svg width="16" height="18" viewBox="0 0 16 18"><path d="M.5.500h6v6h-6z" fill="none" stroke="#aaa"/><circle cx="12" cy="8" r="3.500" fill="none" stroke="#aaa"/><path d="M5 11l4 6H1z" fill="none" stroke="#aaa"/></svg></span></div>
    <div class="sg g7"><span class="sb"><svg width="20" height="18" viewBox="0 0 20 18"><path d="M1 0h11l4 4v12H1z" fill="#6bb6ea"/><path d="M1 10h12v6H1z" fill="#e9c440"/><path d="M11 13l3 3 5-6" fill="none" stroke="#4caf50" stroke-width="2"/></svg></span></div>
    <div class="sg g8">
      <span class="sb"><svg width="16" height="14" viewBox="0 0 16 14"><path d="M.5.500h15v13H.5z" fill="none" stroke="#b0b0b0"/><path d="M3 11l4-4M3 11h3M3 11V8M13 3 9 7M13 3h-3M13 3v3" stroke="#d8d8d8" fill="none"/></svg></span>
      <span class="sb"><svg width="16" height="14" viewBox="0 0 16 14"><path d="M0 1h16M0 7h16M0 13h16" stroke="#e0e0e0" stroke-width="2"/></svg></span>
    </div>
  </div>
</footer>

<footer class="taskbar">
  <span class="tb"><svg width="16" height="16" viewBox="0 0 16 16"><path d="M0 2.300 6.500 1.400V7.500H0zM7.500 1.300 16 0V7.500H7.500zM0 8.500H6.500V14.600L0 13.700zM7.500 8.500H16V16L7.500 14.700z" fill="#fff"/></svg></span>
  <span class="tb"><svg width="16" height="16" viewBox="0 0 16 16"><circle cx="8" cy="8" r="6.500" fill="none" stroke="#fff" stroke-width="2"/></svg></span>
  <span class="tb"><svg width="17" height="16" viewBox="0 0 17 16"><path d="M1.500 4.500h10v7h-10zM1 1h11M1 15h11M15 1v3M15 6v4M15 12v3" fill="none" stroke="#d8d8d8" stroke-width="1.200"/></svg></span>
  <span class="tb tb-gap pinned"><svg width="23" height="20" viewBox="0 0 23 20"><path d="M0 1h9l2 3h12v15H0z" fill="#f2c04a"/><path d="M0 7h23v12H0z" fill="#f7d36c"/><path d="M6 10h11v9h-3v-5H9v5H6z" fill="#2e86d6"/></svg></span>
  <span class="tb"><svg width="25" height="25" viewBox="0 0 25 25"><path d="M12.500 0C20 0 25 5.500 25 12c0 4-3 6-6 6-3.500 0-5-1.500-5-3 2 0 5-.5 5-3.500C19 7 15 4 10 5 4 6 2 11 0 12 1 5 6 0 12.500 0z" fill="#38c2a4"/><path d="M0 12c1-4 4-7 9-7 5 0 7 3 7 5 0 2-2 3-4 3-1 3 2 6 6 6 2 0 3-.5 4-1-2 4-5.500 7-10 7C5 25 0 19 0 12z" fill="#0f7bd4"/></svg></span>
  <span class="tb pinned"><svg width="22" height="24" viewBox="0 0 24 24"><circle cx="12" cy="12" r="12" fill="#e8453c"/><path d="M12 12 1.500 18A12 12 0 0 1 3 4z" fill="#f9bb2d"/><path d="M12 12 22.500 18A12 12 0 0 1 1.500 18z" fill="#34a853"/><path d="M12 7h11a12 12 0 0 1-4 13l-7-8z" fill="#f9bb2d"/><circle cx="12" cy="12" r="5.500" fill="#fff"/><circle cx="12" cy="12" r="4.300" fill="#4285f4"/></svg></span>
  <span class="tb tb-acad"><span class="acad-tile"><svg width="17" height="20" viewBox="0 0 24 28"><path d="M1 27 10 1h8l5 26h-6l-1-6H9l-2 6zM10.500 16h5l-1.500-9z" fill="#c2272d"/></svg></span></span>
  <div class="tray">
    <svg class="tray-chev" width="13" height="8" viewBox="0 0 13 8"><path d="M.5 7.500l6-6 6 6" fill="none" stroke="#e0e0e0" stroke-width="1.200"/></svg>
    <svg width="14" height="16" viewBox="0 0 14 16"><path d="M2 0h7M2 15.500h7M1.500 3h8v9h-8z" fill="none" stroke="#ddd"/><path d="M10 6l3-1.500v6L10 9z" fill="none" stroke="#ddd"/><circle cx="5.500" cy="7.500" r="2" fill="none" stroke="#ddd"/></svg>
    <svg width="17" height="10" viewBox="0 0 17 10"><path d="M4 10a4 4 0 0 1-.5-7.800A5 5 0 0 1 12 2a4 4 0 0 1 1 8z" fill="#eee"/></svg>
    <svg width="17" height="11" viewBox="0 0 17 11"><rect x="1" y="3" width="14" height="8" fill="#eee"/><rect x="15" y="5" width="2" height="4" fill="#eee"/><path d="M0 0h5v3H0z" fill="#ccc"/></svg>
    <svg width="16" height="15" viewBox="0 0 16 15"><path d="M1 14a13 13 0 0 1 13-13M4 14a10 10 0 0 1 10-10M7 14a7 7 0 0 1 7-7M10 14a4 4 0 0 1 4-4" fill="none" stroke="#ccc"/><rect x="12" y="12" width="2" height="2" fill="#ddd"/></svg>
    <svg width="15" height="14" viewBox="0 0 15 14"><path d="M1 4.500h3l3-3v11l-3-3H1z" fill="none" stroke="#ddd"/><path d="M9.500 4.500a4 4 0 0 1 0 5M12 2.500a7 7 0 0 1 0 9" fill="none" stroke="#ccc"/></svg>
  </div>
  <div class="lang"><span>POR</span><span>PTB2</span></div>
  <div class="clock"><span>15:34</span><span>25/01/2021</span></div>
  <div class="notif">
    <svg width="18" height="18" viewBox="0 0 18 18"><path d="M0 0h16v12H8l-3 4v-4H0z" fill="#eee"/><path d="M3 3h10M3 6h10M3 9h7" stroke="#555"/></svg>
    <span class="badge">2</span>
  </div>
</footer>
</body>
</html>
```

FILE: styles.css
```css
* { box-sizing: border-box; }
html, body { margin: 0; padding: 0; }
body {
  width: 1500px; height: 844px; overflow: hidden;
  display: flex; flex-direction: column;
  position: relative;
  font-family: Roboto, "Noto Sans", sans-serif;
  font-size: 11.700px; color: #dcdcdc; background: #3c3c3c;
}
.sprite { position: absolute; }
svg { display: block; flex: none; }
.caret {
  display: inline-block; width: 0; height: 0; flex: none;
  border-left: 3.500px solid transparent; border-right: 3.500px solid transparent;
  border-top: 4px solid #e0e0e0;
}

/* title bar */
.titlebar {
  height: 23px; flex: none; display: flex; align-items: stretch;
  background: linear-gradient(#6e6e6e, #3f3f3f);
  border-bottom: 1px solid #333;
}
.app-btn {
  position: absolute; left: 0; top: 0; width: 38px; height: 38px; z-index: 2;
  background: linear-gradient(#6a6a6a, #b4b4b4);
  border-right: 1px solid #333; border-bottom: 1px solid #333;
  padding: 1px 0 0 3px;
}
.app-caret { position: absolute; left: 29px; top: 17px; }
.qat { width: 294px; flex: none; padding-left: 43px; display: flex; align-items: center; }
.qi { width: 23.500px; display: flex; justify-content: center; flex: none; }
.qcaret { margin-left: 1.500px; margin-right: 2.500px; }
.qredo { width: 24px; }
.qcaret2 { margin-left: 1px; margin-right: 0; }
.qcustom { width: 18px; margin-left: 1px; }
.doc-title {
  width: 611px; flex: none; background: #fff; color: #1c1c1c; text-align: center;
  line-height: 22px; font-size: 11.600px; white-space: pre;
}
.search-arrow { width: 12px; flex: none; display: flex; align-items: center; justify-content: center; background: #555; }
.tri-r { width: 0; height: 0; border-left: 4px solid #ddd; border-top: 4px solid transparent; border-bottom: 4px solid transparent; }
.search-box {
  width: 175px; flex: none; margin: 1px 0; background: #7a7a7a; border: 1px solid #444;
  color: #b8b8b8; font-style: italic; font-size: 11.500px; line-height: 18px; padding-left: 3px;
}
.infocenter { width: 248px; flex: none; display: flex; align-items: center; }
.ic-bino { margin-left: 4px; }
.ic-user { margin-left: 8px; }
.user { margin-left: 6px; width: 80px; color: #d4d4d4; white-space: nowrap; font-size: 12px; }
.ic-c1 { margin-left: 5px; }
.ic-cart { margin-left: 4px; }
.ic-a360 { margin-left: 8px; }
.ic-c2 { margin-left: 5px; }
.ic-sep { width: 1px; height: 17px; background: #555; margin-left: 9px; }
.ic-help { margin-left: 8px; }
.ic-c3 { margin-left: 6px; }
.winctl { flex: 1; background: #fff; display: flex; align-items: center; padding-left: 39px; gap: 34px; }

/* ribbon tabs */
.ribbon-tabs {
  height: 18px; flex: none; display: flex; align-items: stretch; padding-left: 44px;
  background: #474747; border-bottom: 1px solid #383838; position: relative;
}
.rtab { padding: 0 9.800px; line-height: 21px; font-size: 11.500px; color: #cfcfcf; height: 18px; }
.rtab.active { background: #545454; color: #f0f0f0; border: 1px solid #383838; border-bottom: none; border-radius: 2px 2px 0 0; padding: 0 8.500px; line-height: 19px; }
.rtab-extra { margin: 5px 0 0 32px; }
.rtab-caret { margin: 7px 0 0 7px; }

/* ribbon */
.ribbon { height: 97px; flex: none; display: flex; gap: 1px; background: #444; border-bottom: 1px solid #333; padding-top: 1px; position: relative; }
.panel { display: flex; flex-direction: column; background: #535353; flex: none; position: relative; }
.pbody { height: 78px; flex: none; display: flex; }
.pb5 { padding-left: 5px; }
.ptitle {
  height: 17px; flex: none; background: #474747; display: flex; align-items: center; justify-content: center; gap: 6px;
  color: #dadada; position: relative; padding-top: 1px; font-size: 12px;
}
.launch { position: absolute; right: 4px; top: 5px; }
.launch-view { left: 1479px; right: auto; top: 86px; }
.ptitle-props { padding-right: 12px; }
.p-draw { width: 216px; } .p-modify { width: 246px; } .p-anno { width: 164px; }
.p-layers { width: 265px; } .p-block { width: 77px; } .p-props { width: 216px; }
.p-groups { width: 66px; } .p-util { width: 93px; } .p-clip { width: 76px; } .p-view { width: 60px; }

.lg { display: flex; flex-direction: column; align-items: center; padding-top: 3px; flex: none; line-height: 16px; text-align: center; white-space: nowrap; }
.lg > span:not(.caret) { margin-top: 2px; }
.lg > .caret { margin-top: 2px; }
.w38 { width: 38px; } .w40 { width: 40px; } .w41 { width: 41px; } .w43 { width: 43px; } .w44 { width: 44px; }
.w50 { width: 50px; } .w52 { width: 52px; } .w60 { width: 60px; } .w66 { width: 66px; }
.w69 { width: 69px; } .w71 { width: 71px; }
.col { padding-top: 4px; flex: none; display: flex; flex-direction: column; }
.row { height: 24px; display: flex; align-items: center; flex: none; }
.t { margin-left: 5px; white-space: nowrap; }
.cm { margin-left: 6px; }
.col-draw { padding-left: 4px; }
.ctrim { margin-left: 10px; } .cfillet { margin-left: 14px; } .carray { margin-left: 9px; }
.col-anno { padding-left: 4px; }
.cann { margin-left: 6px; }
.col-layers { width: 204px; padding-top: 4px; }
.combo {
  height: 22px; display: flex; align-items: center; flex: none; position: relative;
  background: linear-gradient(#5f5f5f, #474747); border: 1px solid #3a3a3a; color: #e4e4e4;
}
.layer-combo { width: 203px; gap: 4px; padding-left: 5px; margin-bottom: 2px; }
.swatch { width: 13px; height: 13px; background: #fff; border: 1px solid #222; flex: none; margin-left: 1px; }
.combo-c { position: absolute; right: 3px; top: 8px; }
.layer-combo .combo-t { margin-left: 1px; }
.lrow { padding-left: 3px; }
.li { width: 23.500px; flex: none; }
.tl { margin-left: -2px; }
.col-block { padding-left: 3px; }
.cblock { margin-left: 8px; }
.col-pi { width: 20px; padding-left: 2px; }
.col-combos { width: 134px; padding-top: 5px; gap: 1.500px; }
.pc { width: 134px; }
.sw-p { width: 16px; height: 16px; margin-left: 11px; }
.ct-by { margin-left: 9px; }
.lt { width: 62px; height: 1px; background: #cfcfcf; margin-left: 3px; margin-right: 2px; }
.col-gr { padding-left: 2px; }
.grp-on { display: flex; width: 23px; height: 22px; align-items: center; justify-content: center; margin-left: -2px; background: #4d6f9c; border: 1px solid #2f4a70; }
.col-ut { padding-left: 4px; width: 24px; align-items: center; }
.col-cl { padding-left: 4px; width: 24px; align-items: center; }
.ptitle-view { justify-content: flex-start; padding-left: 4px; }

/* file tabs */
.filetabs { height: 29px; flex: none; display: flex; align-items: flex-start; background: #3a3a3a; padding: 4px 0 0 20px; border-bottom: 2px solid #555; position: relative; font-size: 11.200px; }
.ftab { height: 21px; line-height: 23px; flex: none; color: #a8a8a8; border-radius: 9px 9px 0 0; background: #424242; position: relative; white-space: nowrap; }
.x { position: absolute; font-style: normal; font-size: 9px; color: #7a7a7a; top: 0; }
.ft-start { width: 120px; padding-left: 10px; }
.ft-active { width: 201px; margin-left: 2px; padding-left: 9px; background: #4f4f4f; color: #e0e0e0; }
.ft-active .x { left: 182px; }
.ft-2 { width: 195px; margin-left: 2px; padding-left: 10px; }
.ft-2 .x { left: 175px; }
.ft-3 { width: 222px; margin-left: 2px; padding-left: 9px; }
.ft-3 .x { left: 202px; }
.ft-plus { width: 21px; margin-left: 5px; text-align: center; font-size: 15px; font-weight: bold; color: #bbb; background: #4a4a4a; line-height: 20px; }

/* workspace */
.workspace { height: 592px; flex: none; display: flex; }
.canvas { width: 1491px; height: 592px; position: relative; background: #000; overflow: hidden; flex: none; }
.drawing { position: absolute; left: 0; top: 0; }
.scrollstrip { flex: 1; background: linear-gradient(#c4daf0 0, #c4daf0 12%, #a6c6e6 13%, #a6c6e6 100%); }
.lbl { font-family: "Liberation Sans", sans-serif; font-size: 15px; fill: #f2f2f2; }
.lbl-b { font-weight: bold; font-size: 14px; }
.lbl-q { fill: #fff; stroke: #000; stroke-opacity: .55; stroke-width: 2.500px; paint-order: stroke; }
.ete { font-family: "Liberation Sans", sans-serif; font-size: 27px; fill: #00f000; }
.ucs-t { font-family: "Liberation Sans", sans-serif; font-size: 16px; fill: #cfcfcf; font-weight: 300; }
.top { font-family: "Liberation Sans", sans-serif; font-size: 12px; font-weight: bold; fill: #444; text-anchor: middle; }
.dir { font-family: "Liberation Sans", sans-serif; font-size: 18px; font-weight: bold; fill: #9a9a9a; text-anchor: middle; }
.wcs { font-family: "Liberation Sans", sans-serif; font-size: 10.500px; fill: #8a8a8a; }

/* navigation bar */
.navbar {
  position: absolute; left: 1458px; top: 205px; width: 31px; height: 202px; border-radius: 3px;
  background: #505050; mix-blend-mode: screen;
  display: flex; flex-direction: column; align-items: center; padding-top: 83px;
}
.nav-caret { border-top-color: #888; margin: 6px 0 6px; }

/* command line */
.cmdline { position: absolute; left: 430px; top: 566px; width: 640px; height: 26px; display: flex; }
.cmd-left { width: 53px; flex: none; background: #4c4c4c; opacity: .93; display: flex; align-items: center; padding-left: 3px; border-radius: 3px 0 0 0; }
.grip { width: 6px; height: 20px; background-image: radial-gradient(#aaa 1px, transparent 1px); background-size: 3px 3px; flex: none; }
.cmd-x { color: #e6e6e6; font-size: 11px; font-weight: bold; margin-left: 6px; width: 14px; }
.cmd-left svg { margin-left: 5px; }
.cmd-input { flex: 1; display: flex; align-items: center; padding-left: 6px; }
.cmd-input::before { content: ""; position: absolute; left: 53px; right: 0; top: 0; bottom: 0; background: #b5b5b5; mix-blend-mode: screen; border-radius: 0 3px 0 0; }
.cmd-input > * { position: relative; }
.cmd-caret { margin-left: 3px; border-top-color: #555; }
.cmd-text { font-family: "DejaVu Sans Mono", "Liberation Mono", monospace; font-style: italic; font-size: 11.600px; color: #6a6a6a; margin-left: 7px; }
.cmd-input > .cmd-up { position: absolute; right: 4px; top: 10px; width: 0; height: 0; border-left: 4px solid transparent; border-right: 4px solid transparent; border-bottom: 6px solid #222; }

/* status */
.status { height: 46px; flex: none; background: #3c3c3c; border-top: 1px solid #555; display: flex; flex-direction: column; }
.layout-tabs { height: 19px; flex: none; display: flex; padding: 0 0 0 13px; gap: 3px; }
.ltab { width: 60px; height: 17px; flex: none; background: #5a5a5a; color: #b8b8b8; font-size: 11.500px; text-align: center; line-height: 17px; border-radius: 0 0 5px 5px; }
.lt-model { width: 54px; background: #6a6a6a; color: #fff; font-weight: bold; }
.lt-plus { width: 21px; margin-left: 3px; font-weight: bold; font-size: 15px; background: #505050; }
.statusbar { height: 26px; flex: none; display: flex; justify-content: flex-end; gap: 1px; }
.sg { height: 26px; flex: none; display: flex; align-items: center; background: #555; border: 1px solid #6a6a6a; padding-left: 0; }
.g1 { width: 47px; } .g2 { width: 64px; } .g3 { width: 164px; } .g4 { width: 104px; } .g5 { width: 63px; } .g6 { width: 26px; } .g7 { width: 27px; } .g8 { width: 48px; }
.model { width: 45px; text-align: center; color: #e8e8e8; font-size: 12px; }
.sb { width: 23px; height: 24px; display: flex; align-items: center; justify-content: center; flex: none; color: #e0e0e0; }
.sb.on { background: #5a8fc8; margin: 0 .5px; }
.sc { width: 14px; display: flex; justify-content: center; flex: none; }
.sc-n { width: 12px; }
.sb-ratio { width: 20px; font-size: 11.500px; font-weight: 500; }
.sb-plus { width: 25px; margin-left: 1px; }
.g6 .sb, .g7 .sb { width: 24px; }
.cw { border-top-color: #eee; }

/* taskbar */
.taskbar { height: 39px; flex: none; background: #202020; display: flex; align-items: stretch; position: relative; color: #e8e8e8; }
.tb { width: 47.500px; flex: none; display: flex; align-items: center; justify-content: center; border-bottom: 2px solid transparent; }
.tb-gap { margin-left: 2px; }
.pinned { border-bottom-color: #76b9ed; margin-right: 0; }
.tb-acad { background: #3e3e3e; border-bottom-color: #76b9ed; margin-left: 1px; }
.acad-tile { width: 24px; height: 25px; background: #f4e6e0; display: flex; align-items: center; justify-content: center; }
.tray { margin-left: auto; display: flex; align-items: center; gap: 7px; padding-top: 4px; }
.tray-chev { margin-right: 4px; }
.lang { width: 42px; flex: none; display: flex; flex-direction: column; align-items: center; font-size: 11.200px; line-height: 18px; padding: 3px 0 0 4px; }
.clock { width: 68px; flex: none; display: flex; flex-direction: column; align-items: center; font-size: 11.200px; line-height: 18px; padding-top: 2px; }
.notif { width: 54px; flex: none; position: relative; padding: 11px 0 0 13px; }
.badge { position: absolute; left: 20px; top: 19px; width: 17px; height: 17px; border-radius: 50%; border: 1px solid #ddd; background: #202020; color: #fff; font-size: 11px; font-weight: bold; text-align: center; line-height: 15px; }
```
